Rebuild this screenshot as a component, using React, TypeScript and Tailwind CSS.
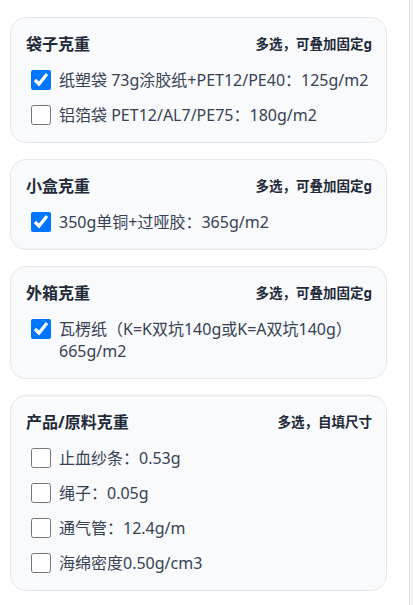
import { useState } from 'react';

type Option = { id: string; label: string; checked: boolean };
type Group = { id: string; title: string; hint: string; options: Option[] };

const groups: Group[] = [
  {
    id: 'bag',
    title: '袋子克重',
    hint: '多选，可叠加固定g',
    options: [
      { id: 'bag-1', label: '纸塑袋 73g涂胶纸+PET12/PE40：125g/m2', checked: true },
      { id: 'bag-2', label: '铝箔袋 PET12/AL7/PE75：180g/m2', checked: false },
    ],
  },
  {
    id: 'box',
    title: '小盒克重',
    hint: '多选，可叠加固定g',
    options: [{ id: 'box-1', label: '350g单铜+过哑胶：365g/m2', checked: true }],
  },
  {
    id: 'carton',
    title: '外箱克重',
    hint: '多选，可叠加固定g',
    options: [
      { id: 'carton-1', label: '瓦楞纸（K=K双坑140g或K=A双坑140g）665g/m2', checked: true },
    ],
  },
  {
    id: 'product',
    title: '产品/原料克重',
    hint: '多选，自填尺寸',
    options: [
      { id: 'p-1', label: '止血纱条：0.53g', checked: false },
      { id: 'p-2', label: '绳子：0.05g', checked: false },
      { id: 'p-3', label: '通气管：12.4g/m', checked: false },
      { id: 'p-4', label: '海绵密度0.50g/cm3', checked: false },
    ],
  },
];

function GroupCard({
  group,
  selected,
  onToggle,
}: {
  group: Group;
  selected: Record<string, boolean>;
  onToggle: (id: string) => void;
}) {
  return (
    <section className="rounded-2xl border border-[#e5e7eb] bg-[#f8fafc] pt-[14px] pb-[10px] pl-[15px] pr-[14px]">
      {/* En-tête : titre + consigne */}
      <div className="mb-[6px] flex items-center justify-between">
        <h2 className="text-[16px] font-bold leading-6 text-[#1f2937]">{group.title}</h2>
        <span className="text-[13.5px] font-bold leading-6 text-[#1f2937]">{group.hint}</span>
      </div>
      <div className="flex flex-col">
        {group.options.map(opt => (
          <label key={opt.id} className="flex cursor-pointer items-start gap-2 py-[6.5px] pl-[5px]">
            <input
              type="checkbox"
              checked={!!selected[opt.id]}
              onChange={() => onToggle(opt.id)}
              className="mt-[1px] h-5 w-5 shrink-0"
            />
            <span className="text-[16px] leading-[22px] text-[#374151]">{opt.label}</span>
          </label>
        ))}
      </div>
    </section>
  );
}

export default function App() {
  const [selected, setSelected] = useState<Record<string, boolean>>(() => {
    const init: Record<string, boolean> = {};
    groups.forEach(g => g.options.forEach(o => (init[o.id] = o.checked)));
    return init;
  });

  const toggle = (id: string) => setSelected(prev => ({ ...prev, [id]: !prev[id] }));

  return (
    <div className="flex min-h-screen bg-white font-['Segoe_UI','Noto_Sans','Noto_Sans_CJK_SC',sans-serif]">
      <main className="flex w-[409px] flex-col gap-4 pt-[17px] pl-[10px] pr-[22px] pb-4">
        {groups.map(g => (
          <GroupCard key={g.id} group={g} selected={selected} onToggle={toggle} />
        ))}
      </main>
      {/* Bande latérale droite */}
      <div className="flex-1 border-l border-[#e6e7ea] bg-[#f3f4f6]" />
    </div>
  );
}
